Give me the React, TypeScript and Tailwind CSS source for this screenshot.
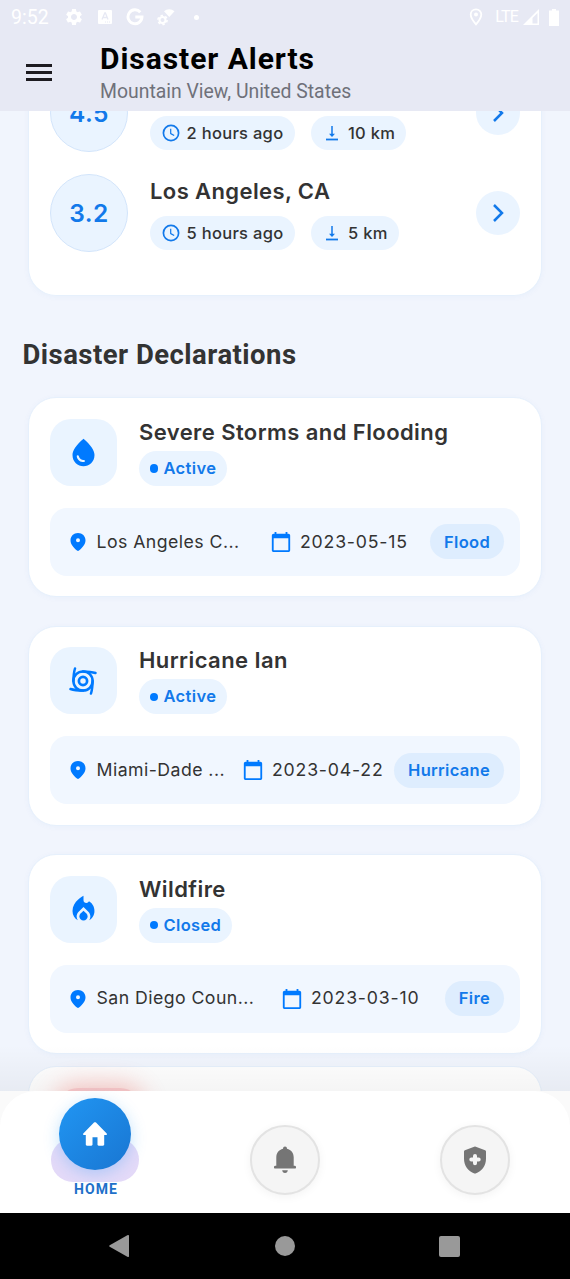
import React from "react";
import { MdCalendarToday, MdLocalFireDepartment, MdSettings, MdWaterDrop } from "react-icons/md";

function StatusBar() {
  return (
    <div className="flex h-[34px] items-center pl-[11px] pr-[11px] text-white">
      <span className="w-[53px] pt-[2px] text-[19.5px] leading-none">9:52</span>
      <MdSettings className="size-[20px]" />
      <svg viewBox="0 0 14 14" className="ml-[14px] size-[14px]">
        <rect width="14" height="14" rx="1" fill="#fff" />
        <path d="M4 9.5 6.8 3h.6L10 9.5M5 7.5h4" fill="none" stroke="#e7e9f4" strokeWidth="1.3" />
        <path d="M7 12h1M9 12h1M11 12h1" stroke="#e7e9f4" strokeWidth="1" />
      </svg>
      <svg viewBox="0 0 18 18" className="ml-[14px] size-[18px]">
        <path d="M14.3 4.2A7 7 0 1 0 16 9H9.3" fill="none" stroke="#fff" strokeWidth="2.9" />
      </svg>
      <svg viewBox="0 0 18 18" className="ml-[13px] size-[18px]">
        <path d="M7 3.2a8 8 0 0 1 10.500 0L12.300 9Z" fill="#fff" />
        <circle cx="5.500" cy="12" r="3" fill="none" stroke="#fff" strokeWidth="2" />
        <circle cx="5.500" cy="12" r="4.600" fill="none" stroke="#fff" strokeWidth="1.500" strokeDasharray="2.400 2.400" />
      </svg>
      <span className="ml-[19px] size-[5px] rounded-full bg-white" />
      <svg viewBox="0 0 14 18" className="ml-auto h-[18px] w-[14px]">
        <path d="M7 1.300c-3 0-5.300 2.300-5.300 5.200C1.700 10.300 7 16.300 7 16.300s5.300-6 5.300-9.800C12.300 3.600 10 1.300 7 1.300Z" fill="none" stroke="#fff" strokeWidth="1.800" />
        <circle cx="7" cy="6.500" r="2" fill="#fff" />
      </svg>
      <span className="ml-[12px] text-[16px] leading-none tracking-[-0.8px]">LTE</span>
      <svg viewBox="0 0 18 18" className="ml-[4px] size-[18px]">
        <path d="M1 17 17 1v16Z" fill="#fff" />
        <path d="M10.500 10 15.500 5v10.500h-5Z" fill="#e7e9f4" />
      </svg>
      <svg viewBox="0 0 10 17" className="ml-[9px] h-[17px] w-[10px]">
        <path d="M3 0h4v1.500h3V17H0V1.500h3Z" fill="#fff" />
      </svg>
    </div>
  );
}

function Header() {
  return (
    <header className="h-[111px] shrink-0 bg-[#e7e9f4] font-['Roboto',sans-serif]">
      <StatusBar />
      <div className="flex h-[77px] items-start">
        <div className="mt-[30px] ml-[26px] flex w-[26px] flex-col gap-[4px]">
          <span className="h-[3px] bg-[#1d1b20]" />
          <span className="h-[3px] bg-[#1d1b20]" />
          <span className="h-[3px] bg-[#1d1b20]" />
        </div>
        <div className="ml-[48px] flex flex-col pt-[7px]">
          <h1 className="text-[30px] leading-[36px] font-bold tracking-[0.95px] whitespace-nowrap text-black">Disaster Alerts</h1>
          <p className="mt-[3px] text-[19.4px] leading-[24px] whitespace-nowrap text-[#6f717a]">Mountain View, United States</p>
        </div>
      </div>
    </header>
  );
}

function Quake({ mag, place, time, depth }: { mag: string; place?: string; time: string; depth: string }) {
  return (
    <div className="flex h-[78px] items-center">
      <div className="flex size-[78px] items-center justify-center rounded-full border border-[#d3e5fb] bg-[#eaf4ff] text-[24.5px] font-semibold tracking-[0.5px] text-[#1279ea]">
        {mag}
      </div>
      <div className="ml-[22px] flex flex-col gap-[10px]">
        <h3 className="h-[30px] text-[22px] leading-[30px] font-semibold tracking-[0.4px] text-[#333]">{place}</h3>
        <div className="flex gap-[16px] text-[16.5px] font-medium tracking-[0.3px] text-[#333]">
          <span className="flex h-[34px] items-center rounded-full bg-[#eaf4ff] pr-[12px] pl-[12px] whitespace-nowrap">
            <svg viewBox="0 0 18 18" className="mr-[6.500px] size-[18px]" fill="none" stroke="#1279ea" strokeWidth="1.700">
              <circle cx="9" cy="9" r="7.600" />
              <path d="M8.700 4.800v4.800l3.500 2" strokeWidth="1.200" />
            </svg>
            {time}
          </span>
          <span className="flex h-[34px] items-center rounded-full bg-[#eaf4ff] pr-[11px] pl-[14px] whitespace-nowrap">
            <svg viewBox="0 0 14 18" className="mr-[8.500px] h-[18px] w-[14px]" fill="none" stroke="#1279ea">
              <path d="M1 15.500h12" strokeWidth="1.800" />
              <path d="M7 2v10" strokeWidth="1.500" />
              <path d="M4 9.800h6L7 13Z" fill="#1279ea" stroke="none" />
            </svg>
            {depth}
          </span>
        </div>
      </div>
      <div className="ml-auto flex size-[44px] items-center justify-center rounded-full bg-[#eaf4ff]">
        <svg viewBox="0 0 12 18" className="h-[18px] w-[12px]" fill="none" stroke="#1279ea" strokeWidth="2.500">
          <path d="m2 1 8 8-8 8" />
        </svg>
      </div>
    </div>
  );
}

function HurricaneIcon() {
  return (
    <svg viewBox="0 0 28 28" className="size-[28px]" fill="none" stroke="#007aff" strokeWidth="2.500" strokeLinecap="round">
      <circle cx="14" cy="14" r="9.600" />
      <circle cx="14" cy="14" r="4.100" strokeWidth="2.700" />
      <path d="M6 1.500C4.900 5 4.500 9 4.400 14" />
      <path d="M26.500 6C23 4.900 19 4.500 14 4.400" />
      <path d="M22 26.500C23.100 23 23.500 19 23.600 14" />
      <path d="M1.500 22C5 23.100 9 23.500 14 23.600" />
    </svg>
  );
}

type Declaration = {
  title: string;
  status: string;
  place: string;
  date: string;
  kind: string;
  icon: React.ReactNode;
  placeWidth: string;
};

const declarations: Declaration[] = [
  {
    title: "Severe Storms and Flooding",
    status: "Active",
    place: "Los Angeles C...",
    date: "2023-05-15",
    kind: "Flood",
    icon: <MdWaterDrop className="size-[33px]" />,
    placeWidth: "w-[173px]",
  },
  {
    title: "Hurricane Ian",
    status: "Active",
    place: "Miami-Dade ...",
    date: "2023-04-22",
    kind: "Hurricane",
    icon: <HurricaneIcon />,
    placeWidth: "w-[145px]",
  },
  {
    title: "Wildfire",
    status: "Closed",
    place: "San Diego Coun...",
    date: "2023-03-10",
    kind: "Fire",
    icon: <MdLocalFireDepartment className="size-[33px]" />,
    placeWidth: "w-[184px]",
  },
];

function DeclarationCard({ d }: { d: Declaration }) {
  return (
    <article className="h-[200px] rounded-[28px] border border-[#e6f0fc] bg-white px-[21px] pt-[20.500px] shadow-[0_1px_6px_rgba(0,90,200,0.04)]">
      <div className="flex h-[67px]">
        <div className="flex size-[67px] items-center justify-center rounded-[21px] bg-[#eaf4ff] pr-[1px] text-[#007aff]">{d.icon}</div>
        <div className="ml-[22px] flex flex-col items-start">
          <h3 className="h-[32px] text-[22px] leading-[26px] font-semibold tracking-[0.42px] whitespace-nowrap text-[#333]">{d.title}</h3>
          <span className="flex h-[35px] items-center rounded-full bg-[#eaf4ff] pr-[11px] pl-[10.500px] text-[16.5px] font-semibold tracking-[0.35px] text-[#1279ea]">
            <i className="mr-[5.500px] size-[8.500px] rounded-full bg-[#007aff]" />
            {d.status}
          </span>
        </div>
      </div>
      <div className="mt-[22px] flex h-[68px] items-center rounded-[17px] bg-[#f1f7ff] pr-[16px] pl-[19.500px] text-[17.7px] tracking-[0.45px] text-[#333]">
        <svg viewBox="0 0 16 20" className="h-[20px] w-[16px] shrink-0" fill="#007aff">
          <path fillRule="evenodd" d="M8 1C3.700 1 .5 4.200.5 8.200c0 4 3 7.300 6.500 10.400.6.500 1.400.5 2 0 3.500-3.100 6.500-6.400 6.500-10.400C15.500 4.200 12.300 1 8 1Zm0 5.300a2 2 0 1 1 0 4 2 2 0 0 1 0-4Z" />
        </svg>
        <span className={`ml-[11px] whitespace-nowrap ${d.placeWidth}`}>{d.place}</span>
        <MdCalendarToday className="size-[22px] shrink-0 text-[#007aff]" />
        <span className="ml-[8.500px] tracking-[0.8px] whitespace-nowrap">{d.date}</span>
        <span className="ml-auto flex h-[35px] items-center rounded-full bg-[#deedfe] px-[14px] text-[16.5px] font-semibold tracking-[0.3px] text-[#1279ea]">
          {d.kind}
        </span>
      </div>
    </article>
  );
}

function NavButton({ children }: { children: React.ReactNode }) {
  return (
    <div className="flex justify-center pt-[34px]">
      <div className="flex size-[70px] items-center justify-center rounded-full border-2 border-[#e3e3e3] bg-[#f5f5f5] text-[#757575] shadow-[0_2px_10px_rgba(0,0,0,0.05)]">
        {children}
      </div>
    </div>
  );
}

function BellIcon() {
  return (
    <svg viewBox="0 0 22 28" className="h-[28px] w-[22px]" fill="currentColor">
      <path d="M9 2.800V2.400a2 2 0 0 1 4 0v.4c4.200 1 6.700 4.200 6.700 8.400v8.500h.9a1.400 1.400 0 0 1 0 2.900H1.400a1.400 1.400 0 0 1 0-2.900h.9v-8.500C2.300 7 4.800 3.800 9 2.800Z" />
      <path d="M8.200 24.300h5.600c0 1.600-1.200 2.800-2.800 2.800s-2.800-1.200-2.800-2.800Z" />
    </svg>
  );
}

function ShieldIcon() {
  return (
    <svg viewBox="0 0 22 28" className="h-[28px] w-[22px]">
      <path d="M10.200.7.900 4.200C.3 4.400 0 4.900 0 5.500v7.300c0 6.900 4.300 12.700 10.400 14.600.4.100.8.100 1.200 0C17.700 25.500 22 19.700 22 12.800V5.500c0-.6-.3-1.100-.9-1.300L11.800.7a2.300 2.300 0 0 0-1.600 0Z" fill="#757575" />
      <path d="M11 10v7.200M7.300 13.600h7.400" stroke="#f5f5f5" strokeWidth="4" strokeLinecap="round" />
    </svg>
  );
}

function BottomNav() {
  return (
    <div className="h-[122px] shrink-0 bg-[#fafafa]">
      <nav className="grid h-full grid-cols-3 rounded-t-[36px] bg-white">
        <div className="flex flex-col items-center pt-[7px]">
          <div className="relative flex h-[84px] w-[88px] justify-center">
            <div className="absolute inset-x-0 bottom-0 h-[44px] rounded-[22px] bg-[#e4daf8]" />
            <div className="relative flex size-[72px] items-center justify-center rounded-full bg-linear-to-br from-[#2196f3] to-[#1976d2] shadow-[0_4px_16px_rgba(33,150,243,0.28)]">
              <svg viewBox="0 0 26 26" className="size-[26px]" fill="#fff">
                <path d="M10.500 23.500v-7.300h5v7.300c0 .7.500 1.200 1.200 1.200h4.300c.7 0 1.200-.5 1.200-1.200v-9.500h2c.8 0 1.100-.9.500-1.400L14 1.600c-.6-.5-1.400-.5-2 0L1.300 12.600c-.6.500-.2 1.400.5 1.400h2v9.500c0 .7.500 1.200 1.200 1.200h4.300c.7 0 1.200-.5 1.200-1.200Z" />
              </svg>
            </div>
          </div>
          <span className="pl-[2px] font-['Roboto',sans-serif] text-[14px] leading-[15px] font-bold tracking-[1.1px] text-[#1e70c9]">HOME</span>
        </div>
        <NavButton><BellIcon /></NavButton>
        <NavButton><ShieldIcon /></NavButton>
      </nav>
    </div>
  );
}

function SystemBar() {
  return (
    <div className="flex h-[66px] shrink-0 items-center justify-between bg-black pr-[110px] pl-[109px]">
      <svg viewBox="0 0 20 22" className="h-[22px] w-[20px]" fill="#999"><path d="M.7 10.200 18.800.1c.6-.3 1.200 0 1.200.7v20.400c0 .7-.6 1-1.200.7L.7 11.800c-.6-.4-.6-1.200 0-1.600Z" /></svg>
      <span className="ml-[1px] size-[20px] rounded-full bg-[#999]" />
      <span className="size-[21px] rounded-[2px] bg-[#999]" />
    </div>
  );
}

export default function App() {
  return (
    <div className="flex h-[1279px] w-[570px] flex-col overflow-hidden bg-[#f1f5fd] font-['Inter',sans-serif]">
      <Header />
      <main className="relative h-[980px] shrink-0 overflow-hidden">
        <section className="mx-[28px] -mt-[37px] flex h-[222px] flex-col gap-[22px] rounded-b-[28px] border border-t-0 border-[#e6f0fc] bg-white px-[21px] shadow-[0_1px_6px_rgba(0,90,200,0.04)]">
          <Quake mag="4.5" time="2 hours ago" depth="10 km" />
          <Quake mag="3.2" place="Los Angeles, CA" time="5 hours ago" depth="5 km" />
        </section>
        <h2 className="mt-[39px] ml-[22.500px] font-['Roboto',sans-serif] text-[27.5px] leading-[40px] font-bold tracking-[0.47px] text-[#333]">Disaster Declarations</h2>
        <div className="mx-[28px] mt-[22.400px] flex flex-col gap-[28.400px]">
          {declarations.map((d) => (
            <DeclarationCard key={d.title} d={d} />
          ))}
        </div>
        <div className="mx-[28px] mt-[11.500px] h-[200px] rounded-[28px] border border-[#e6f0fc] bg-white pt-[21px] pl-[28px]">
          <div className="size-[84px] rounded-[21px] bg-[#f9c8ca] shadow-[0_0_22px_6px_rgba(244,67,54,0.25)]" />
        </div>
        <div className="absolute inset-x-0 bottom-0 h-[46px] bg-linear-to-b from-transparent to-black/4" />
      </main>
      <BottomNav />
      <SystemBar />
    </div>
  );
}
